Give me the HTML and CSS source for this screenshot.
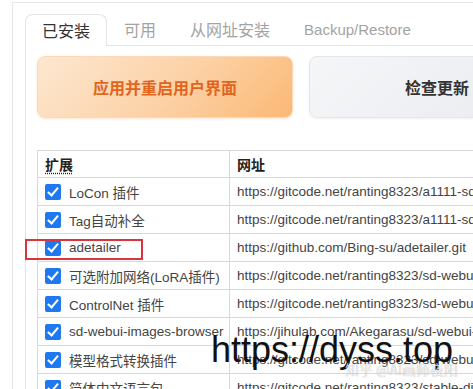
FILE: index.html
```html
<!doctype html>
<html lang="zh-CN">
    <head>
        <meta charset="UTF-8" />
        <meta name="viewport" content="width=device-width, initial-scale=1.0" />
        <title>扩展</title>
        <link rel="stylesheet" href="styles.css">
    </head>
    <body>
        <div class="page">
            <div class="tabs">
                <div class="tab active">已安装</div>
                <div class="tab">可用</div>
                <div class="tab">从网址安装</div>
                <div class="tab latin">Backup/Restore</div>
            </div>
            <div class="panel">
                <div class="actions">
                    <button class="btn primary">应用并重启用户界面</button>
                    <button class="btn secondary">检查更新</button>
                </div>
                <table class="ext-table">
                    <colgroup>
                        <col class="col-name" />
                        <col class="col-url" />
                    </colgroup>
                    <thead>
                        <tr>
                            <th><abbr>扩展</abbr></th>
                            <th>网址</th>
                        </tr>
                    </thead>
                    <tbody>
                        <tr>
                            <td><label class="ext"><span class="check"></span>LoCon 插件</label></td>
                            <td>https://gitcode.net/ranting8323/a1111-sd-webui-locon</td>
                        </tr>
                        <tr>
                            <td><label class="ext"><span class="check"></span>Tag自动补全</label></td>
                            <td>https://gitcode.net/ranting8323/a1111-sd-webui-tagcomplete</td>
                        </tr>
                        <tr>
                            <td><label class="ext"><span class="check"></span>adetailer</label></td>
                            <td>https://github.com/Bing-su/adetailer.git</td>
                        </tr>
                        <tr>
                            <td><label class="ext"><span class="check"></span>可选附加网络(LoRA插件)</label></td>
                            <td>https://gitcode.net/ranting8323/sd-webui-additional-networks</td>
                        </tr>
                        <tr>
                            <td><label class="ext"><span class="check"></span>ControlNet 插件</label></td>
                            <td>https://gitcode.net/ranting8323/sd-webui-controlnet</td>
                        </tr>
                        <tr>
                            <td><label class="ext"><span class="check"></span>sd-webui-images-browser</label></td>
                            <td>https://jihulab.com/Akegarasu/sd-webui-images-browser</td>
                        </tr>
                        <tr>
                            <td><label class="ext"><span class="check"></span>模型格式转换插件</label></td>
                            <td>https://gitcode.net/ranting8323/sd-webui-model-converter</td>
                        </tr>
                        <tr>
                            <td><label class="ext"><span class="check"></span>简体中文语言包</label></td>
                            <td>https://gitcode.net/ranting8323/stable-diffusion-webui-localization-zh_CN</td>
                        </tr>
                    </tbody>
                </table>
            </div>
        </div>
        <div class="highlight"></div>
        <div class="watermark">https://dyss.top</div>
        <div class="zhihu">知乎 @AI画师夜阳</div>
    </body>
</html>
```

FILE: styles.css
```css
html,
body {
    margin: 0;
    padding: 0;
    background: #fff;
    overflow: hidden;
    height: 389px;
}

body {
    font-family: "Liberation Sans", "Noto Sans CJK SC", sans-serif;
    color: #3a3a3a;
    position: relative;
}

.page {
    margin: 2px 0 0 12px;
    border-top: 1px solid #e6e6e6;
    border-left: 1px solid #e6e6e6;
    padding: 11px 0 0 12px;
    width: 900px;
}

.tabs {
    display: flex;
    border-bottom: 1px solid #e4e4e4;
    height: 31px;
}

.tab {
    padding: 0 17px;
    font-size: 16px;
    line-height: 31px;
    color: #a3a3a3;
    font-family: "Noto Sans CJK SC", sans-serif;
}

.tab.latin {
    font-family: "Liberation Sans", sans-serif;
    font-size: 15px;
}

.tab.active {
    color: #333;
    border: 1px solid #e4e4e4;
    border-bottom: none;
    border-radius: 8px 8px 0 0;
    background: #fff;
    height: 31px;
    line-height: 30px;
    margin-bottom: -1px;
    padding: 0 16px;
}

.panel {
    border-left: 1px solid #e4e4e4;
    padding: 10px 0 0 11px;
    height: 400px;
}

.actions {
    display: flex;
    gap: 16px;
}

.btn {
    width: 256px;
    height: 62px;
    border-radius: 8px;
    font-family: "Noto Sans CJK SC", sans-serif;
    font-size: 16px;
    font-weight: 700;
    cursor: pointer;
}

.btn.primary {
    background: linear-gradient(135deg, #fde7d1 0%, #fcd1a5 55%, #fbb874 100%);
    border: 1px solid #fbd9b8;
    color: #e0651e;
    box-shadow: 0 1px 3px rgba(240, 160, 90, 0.25);
}

.btn.secondary {
    background: linear-gradient(135deg, #f5f6f8 0%, #e9eaee 100%);
    border: 1px solid #e4e6ea;
    color: #333;
    box-shadow: 0 1px 3px rgba(0, 0, 0, 0.06);
}

.ext-table {
    margin-top: 32px;
    border-collapse: collapse;
    table-layout: fixed;
    width: 700px;
    font-size: 13.5px;
}

.col-name {
    width: 192px;
}

.ext-table th,
.ext-table td {
    border: 1px solid #d8d8d8;
    padding: 0 7px;
    text-align: left;
    white-space: nowrap;
    overflow: hidden;
    height: 27px;
    color: #444;
}

.ext-table th {
    height: 26px;
    color: #222;
    font-weight: 700;
    font-family: "Noto Sans CJK SC", sans-serif;
    font-size: 14px;
}

abbr {
    text-decoration: underline dotted;
    text-underline-offset: 3px;
}

.ext {
    display: flex;
    align-items: center;
    gap: 8px;
}

.check {
    width: 16px;
    height: 16px;
    border-radius: 2px;
    background: #1e78f0;
    position: relative;
    flex: none;
}

.check::after {
    content: "";
    position: absolute;
    left: 5px;
    top: 1px;
    width: 4px;
    height: 9px;
    border: solid #fff;
    border-width: 0 2px 2px 0;
    transform: rotate(40deg);
}

.highlight {
    position: absolute;
    left: 25px;
    top: 239px;
    width: 114px;
    height: 17px;
    border: 2px solid #d8363c;
}

.watermark {
    position: absolute;
    left: 211px;
    top: 330px;
    font-family: "Liberation Sans", sans-serif;
    font-size: 36px;
    line-height: 40px;
    color: #111;
}

.zhihu {
    position: absolute;
    left: 345px;
    top: 360px;
    font-family: "Noto Sans CJK SC", sans-serif;
    font-size: 14px;
    line-height: 18px;
    color: rgba(255, 255, 255, 0.75);
    text-shadow: 0 0 1px rgba(0, 0, 0, 0.35);
}
```
